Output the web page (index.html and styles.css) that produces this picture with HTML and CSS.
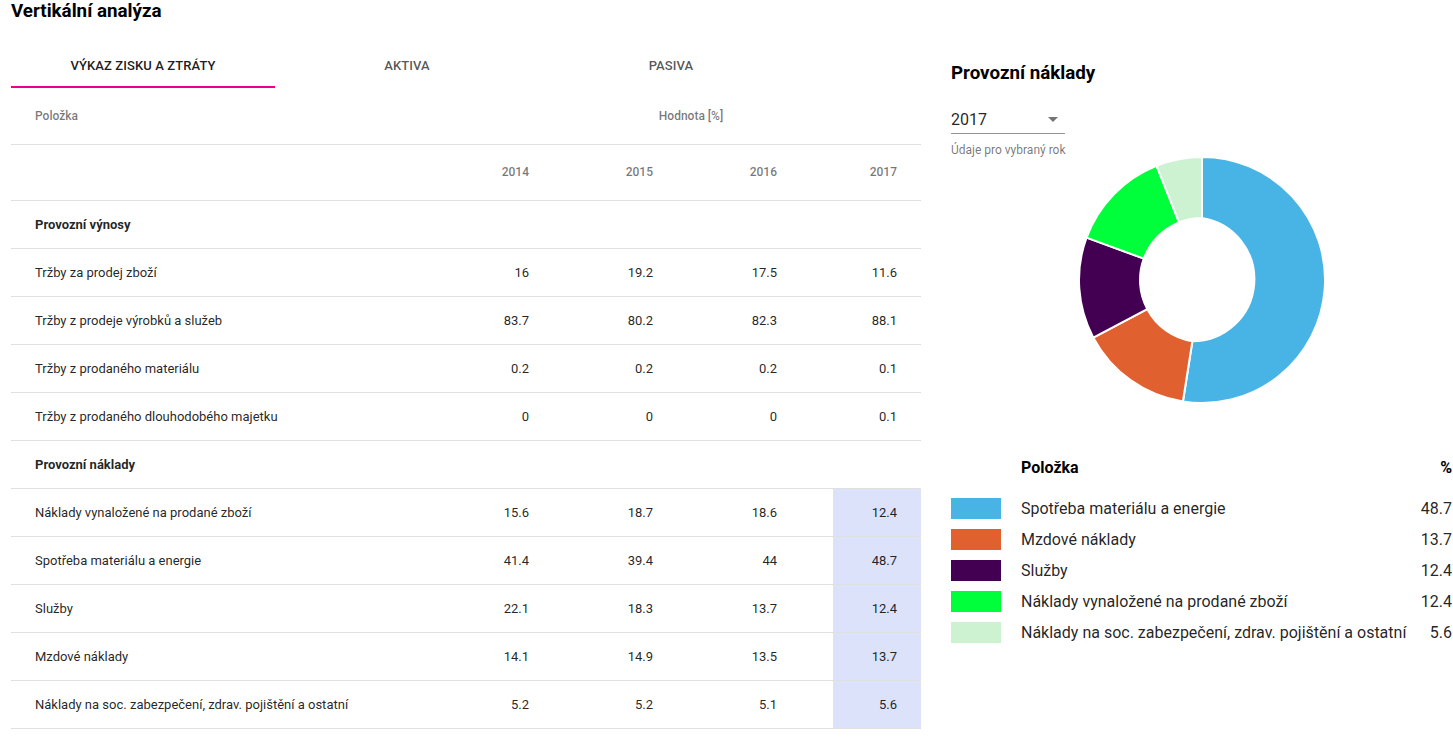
FILE: index.html
```html
<!DOCTYPE html>
<html lang="cs">
<head>
<meta charset="utf-8">
<title>Vertikální analýza</title>
<link rel="stylesheet" href="styles.css">
</head>
<body>
<div class="page">
  <h1 class="title">Vertikální analýza</h1>
  <div class="layout">
    <section class="left">
      <div class="tabs">
        <div class="tab tab-active">Výkaz zisku a ztráty</div>
        <div class="tab">Aktiva</div>
        <div class="tab">Pasiva</div>
      </div>
      <table class="grid">
        <colgroup>
          <col class="c-name"><col class="c-num"><col class="c-num"><col class="c-num"><col class="c-last">
        </colgroup>
        <thead>
          <tr class="head-row"><th class="name">Položka</th><th class="center" colspan="4">Hodnota [%]</th></tr>
          <tr class="head-row"><th class="name"></th><th class="num">2014</th><th class="num">2015</th><th class="num">2016</th><th class="num">2017</th></tr>
        </thead>
        <tbody>
          <tr class="section"><td class="name">Provozní výnosy</td><td></td><td></td><td></td><td></td></tr>
          <tr><td class="name">Tržby za prodej zboží</td><td class="num">16</td><td class="num">19.2</td><td class="num">17.5</td><td class="num">11.6</td></tr>
          <tr><td class="name">Tržby z prodeje výrobků a služeb</td><td class="num">83.7</td><td class="num">80.2</td><td class="num">82.3</td><td class="num">88.1</td></tr>
          <tr><td class="name">Tržby z prodaného materiálu</td><td class="num">0.2</td><td class="num">0.2</td><td class="num">0.2</td><td class="num">0.1</td></tr>
          <tr><td class="name">Tržby z prodaného dlouhodobého majetku</td><td class="num">0</td><td class="num">0</td><td class="num">0</td><td class="num">0.1</td></tr>
          <tr class="section"><td class="name">Provozní náklady</td><td></td><td></td><td></td><td></td></tr>
          <tr><td class="name">Náklady vynaložené na prodané zboží</td><td class="num">15.6</td><td class="num">18.7</td><td class="num">18.6</td><td class="num hl">12.4</td></tr>
          <tr><td class="name">Spotřeba materiálu a energie</td><td class="num">41.4</td><td class="num">39.4</td><td class="num">44</td><td class="num hl">48.7</td></tr>
          <tr><td class="name">Služby</td><td class="num">22.1</td><td class="num">18.3</td><td class="num">13.7</td><td class="num hl">12.4</td></tr>
          <tr><td class="name">Mzdové náklady</td><td class="num">14.1</td><td class="num">14.9</td><td class="num">13.5</td><td class="num hl">13.7</td></tr>
          <tr><td class="name">Náklady na soc. zabezpečení, zdrav. pojištění a ostatní</td><td class="num">5.2</td><td class="num">5.2</td><td class="num">5.1</td><td class="num hl">5.6</td></tr>
        </tbody>
      </table>
    </section>
    <aside class="right">
      <h2 class="subtitle">Provozní náklady</h2>
      <div class="select">
        <span class="select-value">2017</span>
        <span class="select-arrow"></span>
      </div>
      <div class="helper">Údaje pro vybraný rok</div>
      <svg class="donut" width="246" height="246" viewBox="0 0 246 246">
        <g stroke="#fff" stroke-width="2" stroke-linejoin="round">
          <path fill="#48b3e5" d="M123,0 A123,123 0 1 1 103.92,244.51 L113.38,184.25 A62,62 0 0 0 123,61 Z"/>
          <path fill="#e1602f" d="M103.92,244.51 A123,123 0 0 1 14.33,180.61 L68.22,152.04 A62,62 0 0 0 113.38,184.25 Z"/>
          <path fill="#430052" d="M14.33,180.61 A123,123 0 0 1 7.54,80.58 L64.80,101.62 A62,62 0 0 0 68.22,152.04 Z"/>
          <path fill="#00ff3b" d="M7.54,80.58 A123,123 0 0 1 77.47,8.74 L100.05,65.40 A62,62 0 0 0 64.80,101.62 Z"/>
          <path fill="#ccf2d1" d="M77.47,8.74 A123,123 0 0 1 123,0 L123,61 A62,62 0 0 0 100.05,65.40 Z"/>
        </g>
      </svg>
      <div class="legend">
        <div class="legend-head"><span class="sw-space"></span><span class="lg-name">Položka</span><span class="lg-val">%</span></div>
        <div class="legend-row"><span class="sw sw-blue"></span><span class="lg-name">Spotřeba materiálu a energie</span><span class="lg-val">48.7</span></div>
        <div class="legend-row"><span class="sw sw-orange"></span><span class="lg-name">Mzdové náklady</span><span class="lg-val">13.7</span></div>
        <div class="legend-row"><span class="sw sw-purple"></span><span class="lg-name">Služby</span><span class="lg-val">12.4</span></div>
        <div class="legend-row"><span class="sw sw-green"></span><span class="lg-name">Náklady vynaložené na prodané zboží</span><span class="lg-val">12.4</span></div>
        <div class="legend-row"><span class="sw sw-light"></span><span class="lg-name">Náklady na soc. zabezpečení, zdrav. pojištění a ostatní</span><span class="lg-val">5.6</span></div>
      </div>
    </aside>
  </div>
</div>
</body>
</html>
```

FILE: styles.css
```css
* { box-sizing: border-box; }
html, body { margin: 0; padding: 0; background: #fff; }
body {
  font-family: Roboto, "Liberation Sans", Arial, sans-serif;
  color: rgba(0, 0, 0, 0.87);
}
.page { padding: 0 0 0 11px; width: 1453px; }
.title {
  margin: 0;
  font-size: 18.75px;
  line-height: 22px;
  font-weight: 700;
  color: #000;
}
.layout {
  display: flex;
  gap: 30px;
  margin-top: 18px;
}
.left { width: 910px; flex: none; }
.right { width: 502px; flex: none; }

/* Tabs */
.tabs { display: flex; height: 48px; }
.tab {
  width: 264px;
  display: flex;
  align-items: center;
  justify-content: center;
  padding-top: 4px;
  padding-bottom: 2px;
  font-size: 13px;
  font-weight: 500;
  text-transform: uppercase;
  color: rgba(0, 0, 0, 0.68);
  letter-spacing: 0.1px;
}
.tab-active {
  color: rgba(0, 0, 0, 0.9);
  border-bottom: 2px solid #ec008c;
  padding-bottom: 0;
}

/* Table */
.grid {
  width: 910px;
  border-collapse: collapse;
  table-layout: fixed;
}
.c-name { width: 450px; }
.c-num { width: 124px; }
.c-last { width: 88px; }
.grid th, .grid td {
  border-bottom: 1px solid #e0e0e0;
  padding: 0 56px 0 24px;
  vertical-align: middle;
  white-space: nowrap;
}
.grid th:last-child, .grid td:last-child { padding-right: 24px; }
.head-row { height: 56px; }
.grid th {
  font-size: 12px;
  font-weight: 500;
  color: rgba(0, 0, 0, 0.54);
  text-align: left;
}
.grid th.center { text-align: center; padding-right: 24px; }
.grid tbody tr { height: 48px; }
.grid td {
  font-size: 13px;
  color: rgba(0, 0, 0, 0.87);
}
.grid .num { text-align: right; }
.grid .section td { font-weight: 700; }
.grid td.hl { background: #dbe2fa; }

/* Right panel */
.subtitle {
  margin: 22px 0 0 0;
  font-size: 18.75px;
  line-height: 22px;
  font-weight: 700;
  color: #000;
}
.select {
  width: 114px;
  margin-top: 19px;
  padding: 7px 0 4px 0;
  border-bottom: 1px solid rgba(0, 0, 0, 0.42);
  display: flex;
  align-items: center;
  justify-content: space-between;
  font-size: 16px;
  line-height: 19px;
}
.select-arrow {
  width: 0;
  height: 0;
  margin-right: 7px;
  border-left: 5px solid transparent;
  border-right: 5px solid transparent;
  border-top: 5px solid rgba(0, 0, 0, 0.54);
}
.helper {
  margin-top: 9px;
  font-size: 12px;
  line-height: 14px;
  color: rgba(0, 0, 0, 0.54);
}
.donut {
  display: block;
  margin: 0 0 0 128px;
  overflow: visible;
}
.legend {
  margin-top: 54px;
  display: flex;
  flex-direction: column;
  gap: 10px;
  font-size: 16px;
  color: rgba(0, 0, 0, 0.87);
}
.legend-head, .legend-row {
  display: flex;
  align-items: center;
  height: 21px;
  padding-right: 1px;
}
.legend-head { margin-bottom: 10px; font-weight: 700; color: #000; }
.sw, .sw-space { width: 50px; height: 21px; flex: none; margin-right: 20px; }
.lg-name { flex: 1; white-space: nowrap; }
.lg-val { text-align: right; }
.sw-blue { background: #48b3e5; }
.sw-orange { background: #e1602f; }
.sw-purple { background: #430052; }
.sw-green { background: #00ff3b; }
.sw-light { background: #ccf2d1; }
```
